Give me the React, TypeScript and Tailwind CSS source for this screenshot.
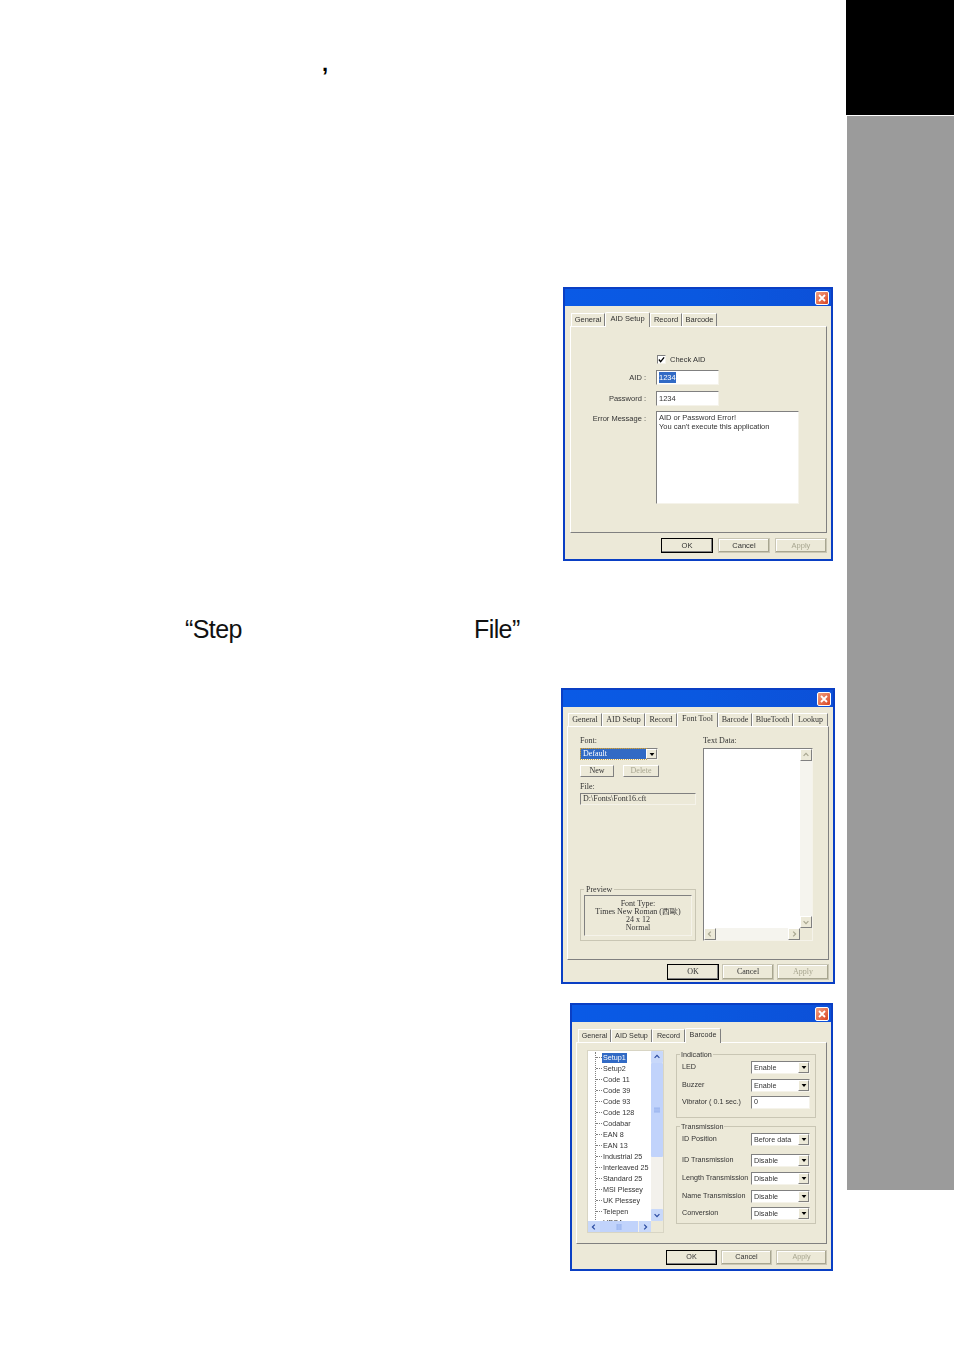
import type { ReactNode } from "react";

const SUNKEN = "border border-t-[#808080] border-l-[#808080] border-r-[#f5f3ea] border-b-[#f5f3ea]";
const RAISED = "border border-t-white border-l-white border-r-[#808080] border-b-[#808080]";

function CloseIcon() {
  return (
    <div className="flex h-[14px] w-[14px] items-center justify-center rounded-[2px] border border-white bg-gradient-to-br from-[#f0a080] to-[#d8401c]">
      <svg viewBox="0 0 10 10" className="h-[10px] w-[10px]">
        <path d="M2 2 L8 8 M8 2 L2 8" stroke="#fff" strokeWidth="1.8" />
      </svg>
    </div>
  );
}

function Tabs({ tabs, active, offset }: { tabs: [string, number][]; active: number; offset: string }) {
  return (
    <div className={`flex items-end h-[14px] ${offset}`}>
      {tabs.map(([name, w], i) => (
        <div
          key={name}
          style={{ width: w }}
          className={
            i === active
              ? "relative z-10 -mb-px flex h-[15px] shrink-0 items-start justify-center rounded-t-[2px] border border-b-0 border-t-white border-l-white border-r-[#808080] bg-[#ece9d8] pt-[1px] leading-[10px]"
              : "flex h-[13px] shrink-0 items-center justify-center border-t border-l border-r border-t-white border-l-white border-r-[#808080] leading-[10px]"
          }
        >
          {name}
        </div>
      ))}
    </div>
  );
}

function Buttons({ w, h, gap }: { w: number; h: number; gap: string }) {
  return (
    <div className={`flex justify-end ${gap}`}>
      <div style={{ width: w, height: h }} className="flex items-center justify-center border border-black bg-[#ece9d8] shadow-[inset_-1px_-1px_0_#808080]">OK</div>
      <div style={{ width: w, height: h }} className="flex items-center justify-center border border-[#c9c6b4] bg-[#ece9d8] shadow-[inset_-1px_-1px_0_#a8a690,inset_1px_1px_0_#fff]">Cancel</div>
      <div style={{ width: w, height: h }} className="flex items-center justify-center border border-[#c9c6b4] bg-[#ece9d8] text-[#a8a690] shadow-[inset_-1px_-1px_0_#a8a690,inset_1px_1px_0_#fff]">Apply</div>
    </div>
  );
}

function Dialog({ className, font, children }: { className: string; font: string; children: ReactNode }) {
  return (
    <div className={`flex shrink-0 flex-col border-2 border-[#0a3fc4] bg-[#ece9d8] text-[#333] blur-[0.4px] ${font} ${className}`}>
      <div className="flex h-[17px] shrink-0 items-center justify-end bg-gradient-to-r from-[#0a5ae6] via-[#0a58e0] to-[#0c50d8] pr-[2px]">
        <CloseIcon />
      </div>
      {children}
    </div>
  );
}

function Arrow({ dir, color = "#000" }: { dir: "up" | "down" | "left" | "right"; color?: string }) {
  const d = {
    up: "M2 6 L5 3 L8 6",
    down: "M2 4 L5 7 L8 4",
    left: "M6 2 L3 5 L6 8",
    right: "M4 2 L7 5 L4 8",
  }[dir];
  return (
    <svg viewBox="0 0 10 10" className="h-[8px] w-[8px]">
      <path d={d} fill="none" stroke={color} strokeWidth="1.5" />
    </svg>
  );
}

function Grip({ vertical }: { vertical?: boolean }) {
  return (
    <svg viewBox="0 0 8 8" className={vertical ? "h-[6px] w-[6px]" : "h-[6px] w-[6px] rotate-90"}>
      <path d="M0 1.5 H8 M0 4 H8 M0 6.5 H8" stroke="#7f9fe6" strokeWidth="1" />
    </svg>
  );
}

function Combo({ value, w, h = 13 }: { value: string; w: number; h?: number }) {
  return (
    <div style={{ width: w, height: h }} className={`flex items-center justify-between bg-white ${SUNKEN}`}>
      <span className="pl-[2px] leading-none">{value}</span>
      <span className={`flex h-full w-[11px] items-center justify-center bg-[#ece9d8] ${RAISED}`}>
        <svg viewBox="0 0 8 5" className="h-[3px] w-[6px]">
          <path d="M0 0 H8 L4 5 Z" fill="#000" />
        </svg>
      </span>
    </div>
  );
}

function AidDialog() {
  const label = "flex h-[14px] w-[76px] items-center justify-end pr-[1px]";
  return (
    <Dialog className="ml-[563px] h-[274px] w-[270px]" font="font-['Liberation_Sans',sans-serif] text-[7.5px]">
      <div className="flex flex-1 flex-col pt-[6px] pl-[5px] pr-[4px]">
        <Tabs tabs={[["General", 34], ["AID Setup", 45], ["Record", 32], ["Barcode", 35]]} active={1} offset="pl-[1px]" />
        <div className={`flex h-[207px] shrink-0 flex-col gap-[5px] pt-[27px] ${RAISED}`}>
          <div className="flex items-center gap-[4px] pl-[86px]">
            <span className={`flex h-[9px] w-[9px] items-center justify-center bg-white ${SUNKEN}`}>
              <svg viewBox="0 0 8 8" className="h-[7px] w-[7px]">
                <path d="M1 4 L3 6.5 L7 1.5" fill="none" stroke="#000" strokeWidth="1.5" />
              </svg>
            </span>
            <span>Check AID</span>
          </div>
          <div className="flex items-center gap-[9px]">
            <span className={label}>AID :</span>
            <div className={`flex h-[15px] w-[63px] items-center bg-white pl-[2px] ${SUNKEN}`}>
              <span className="bg-[#316ac5] text-white">1234</span>
            </div>
          </div>
          <div className="mt-[1px] flex items-center gap-[9px]">
            <span className={label}>Password :</span>
            <div className={`flex h-[15px] w-[63px] items-center bg-white pl-[2px] ${SUNKEN}`}>1234</div>
          </div>
          <div className="flex items-start gap-[9px]">
            <span className={label}>Error Message :</span>
            <div className={`h-[93px] w-[143px] bg-white pl-[2px] pt-[2px] leading-[8.5px] ${SUNKEN}`}>
              AID or Password Error!
              <br />
              You can't execute this application
            </div>
          </div>
        </div>
        <div className="mt-[5px]">
          <Buttons w={52} h={15} gap="gap-[5px]" />
        </div>
      </div>
    </Dialog>
  );
}

function FontDialog() {
  return (
    <Dialog className="ml-[561px] h-[296px] w-[274px]" font="font-['Liberation_Serif',serif] text-[8px]">
      <div className="flex flex-1 flex-col pt-[5px] pl-[4px] pr-[4px]">
        <Tabs
          tabs={[["General", 34], ["AID Setup", 43], ["Record", 32], ["Font Tool", 41], ["Barcode", 34], ["BlueTooth", 41], ["Lookup", 35]]}
          active={3}
          offset="pl-[1px]"
        />
        <div className={`flex h-[234px] shrink-0 gap-[7px] pl-[12px] pt-[9px] ${RAISED}`}>
          <div className="flex h-[205px] w-[116px] flex-col">
            <div className="h-[12px] leading-[10px]">Font:</div>
            <div className={`flex h-[12px] w-[78px] items-center justify-between bg-white ${SUNKEN}`}>
              <span className="h-full w-[65px] bg-[#316ac5] pl-[2px] leading-[10px] text-white outline-1 outline-dotted outline-[#c8a040]">Default</span>
              <span className={`flex h-full w-[11px] items-center justify-center bg-[#ece9d8] ${RAISED}`}>
                <svg viewBox="0 0 8 5" className="h-[3px] w-[6px]">
                  <path d="M0 0 H8 L4 5 Z" fill="#000" />
                </svg>
              </span>
            </div>
            <div className="mt-[5px] flex gap-[9px]">
              <div className={`flex h-[12px] w-[34px] items-center justify-center ${RAISED}`}>New</div>
              <div className={`flex h-[12px] w-[36px] items-center justify-center text-[#a8a690] ${RAISED}`}>Delete</div>
            </div>
            <div className="mt-[4px] h-[12px] leading-[12px]">File:</div>
            <div className={`flex h-[12px] items-center pl-[2px] ${SUNKEN}`}>D:\Fonts\Font16.cft</div>
            <div className="flex-1" />
            <div className="h-[52px] border border-[#c9c6b4] px-[3px] pb-[3px]">
              <div className="-mt-[5px] h-[10px] w-fit bg-[#ece9d8] px-[2px] leading-[10px]">Preview</div>
              <div className={`flex h-[41px] flex-col items-center justify-center leading-[8px] ${SUNKEN}`}>
                <span>Font Type:</span>
                <span>Times New Roman (西歐)</span>
                <span>24 x 12</span>
                <span>Normal</span>
              </div>
            </div>
          </div>
          <div className="flex h-[205px] w-[110px] flex-col">
            <div className="h-[12px] leading-[10px]">Text Data:</div>
            <div className={`flex flex-1 flex-col bg-white ${SUNKEN}`}>
              <div className="flex flex-1">
                <div className="flex-1" />
                <div className="flex w-[12px] flex-col justify-between bg-[#f5f4ee]">
                  <span className={`flex h-[12px] items-center justify-center bg-[#ece9d8] ${RAISED}`}><Arrow dir="up" color="#a8a690" /></span>
                  <span className={`flex h-[12px] items-center justify-center bg-[#ece9d8] ${RAISED}`}><Arrow dir="down" color="#a8a690" /></span>
                </div>
              </div>
              <div className="flex h-[12px] bg-[#f5f4ee]">
                <span className={`flex w-[12px] items-center justify-center bg-[#ece9d8] ${RAISED}`}><Arrow dir="left" color="#a8a690" /></span>
                <div className="flex-1" />
                <span className={`flex w-[12px] items-center justify-center bg-[#ece9d8] ${RAISED}`}><Arrow dir="right" color="#a8a690" /></span>
                <div className="w-[12px] bg-[#ece9d8]" />
              </div>
            </div>
          </div>
        </div>
        <div className="mt-[4px]">
          <Buttons w={52} h={16} gap="gap-[3px]" />
        </div>
      </div>
    </Dialog>
  );
}

const TREE = ["Setup1", "Setup2", "Code 11", "Code 39", "Code 93", "Code 128", "Codabar", "EAN 8", "EAN 13", "Industrial 25", "Interleaved 25", "Standard 25", "MSI Plessey", "UK Plessey", "Telepen", "UPCA"];

function BarcodeDialog() {
  const row = "flex items-center justify-between pl-[5px] pr-[5px]";
  return (
    <Dialog className="ml-[570px] h-[268px] w-[263px]" font="font-['Liberation_Sans',sans-serif] text-[7.2px]">
      <div className="flex flex-1 flex-col pt-[6px] pl-[4px] pr-[4px]">
        <Tabs tabs={[["General", 33], ["AID Setup", 41], ["Record", 33], ["Barcode", 36]]} active={3} offset="pl-[2px]" />
        <div className={`flex h-[202px] shrink-0 gap-[12px] pl-[10px] pt-[7px] ${RAISED}`}>
          <div className="flex h-[183px] w-[77px] flex-col border border-[#d8d5c4] bg-white">
            <div className="flex h-[170px]">
              <div className="flex-1 overflow-hidden pt-[1px]">
                <div className="ml-[7px] flex flex-col border-l border-dotted border-[#808080]">
                  {TREE.map((t, i) => (
                    <div key={t} className="flex h-[11px] shrink-0 items-center">
                      <span className="w-[6px] border-t border-dotted border-[#808080]" />
                      <span className={i === 0 ? "bg-[#316ac5] px-[1px] leading-[10px] text-white" : "px-[1px] leading-[10px]"}>{t}</span>
                    </div>
                  ))}
                </div>
              </div>
              <div className="flex w-[12px] flex-col bg-[#f3f1ec]">
                <span className="flex h-[12px] items-center justify-center rounded-[1px] bg-[#c8d8fa]"><Arrow dir="up" color="#2a4aa0" /></span>
                <span className="flex h-[94px] items-center justify-center rounded-[1px] bg-[#c1d3fb]"><Grip vertical /></span>
                <div className="flex-1" />
                <span className="flex h-[12px] items-center justify-center rounded-[1px] bg-[#c8d8fa]"><Arrow dir="down" color="#2a4aa0" /></span>
              </div>
            </div>
            <div className="flex h-[12px] bg-[#f3f1ec]">
              <span className="flex w-[12px] items-center justify-center bg-[#c8d8fa]"><Arrow dir="left" color="#2a4aa0" /></span>
              <span className="flex w-[38px] items-center justify-center bg-[#c1d3fb]"><Grip /></span>
              <span className="w-[1px]" />
              <span className="flex w-[12px] items-center justify-center bg-[#c8d8fa]"><Arrow dir="right" color="#2a4aa0" /></span>
              <span className="w-[12px] bg-[#ece9d8]" />
            </div>
          </div>
          <div className="flex w-[140px] flex-col pt-[4px]">
            <div className="h-[64px] border border-[#c9c6b4]">
              <div className="-mt-[5px] ml-[3px] h-[10px] w-fit bg-[#ece9d8] px-[1px] leading-[10px]">Indication</div>
              <div className={`${row} mt-[1px]`}><span>LED</span><Combo value="Enable" w={59} /></div>
              <div className={`${row} mt-[5px]`}><span>Buzzer</span><Combo value="Enable" w={59} /></div>
              <div className={`${row} mt-[4px]`}>
                <span>Vibrator ( 0.1 sec.)</span>
                <div className={`flex h-[13px] w-[59px] items-center bg-white pl-[2px] ${SUNKEN}`}>0</div>
              </div>
            </div>
            <div className="mt-[8px] h-[98px] border border-[#c9c6b4]">
              <div className="-mt-[5px] ml-[3px] h-[10px] w-fit bg-[#ece9d8] px-[1px] leading-[10px]">Transmission</div>
              <div className={`${row} mt-[1px]`}><span>ID Position</span><Combo value="Before data" w={59} /></div>
              <div className={`${row} mt-[8px]`}><span>ID Transmission</span><Combo value="Disable" w={59} /></div>
              <div className={`${row} mt-[5px]`}><span>Length Transmission</span><Combo value="Disable" w={59} /></div>
              <div className={`${row} mt-[5px]`}><span>Name Transmission</span><Combo value="Disable" w={59} /></div>
              <div className={`${row} mt-[4px]`}><span>Conversion</span><Combo value="Disable" w={59} /></div>
            </div>
          </div>
        </div>
        <div className="mt-[6px]">
          <Buttons w={51} h={15} gap="gap-[4px]" />
        </div>
      </div>
    </Dialog>
  );
}

export default function App() {
  return (
    <div className="flex h-[1352px] w-[954px] overflow-hidden bg-white">
      <main className="flex w-[846px] shrink-0 flex-col">
        <div className="mt-[52px] h-[24px] pl-[322px] font-['Liberation_Sans',sans-serif] text-[22px] font-bold leading-[24px] text-black">,</div>
        <div className="mt-[211px]">
          <AidDialog />
        </div>
        <div className="ml-[185px] mt-[52px] flex h-[32px] font-['Liberation_Sans',sans-serif] text-[25px] leading-[32px] tracking-[-0.6px] text-[#111]">
          <span className="w-[289px]">“Step</span>
          <span>File”</span>
        </div>
        <div className="mt-[43px]">
          <FontDialog />
        </div>
        <div className="mt-[19px]">
          <BarcodeDialog />
        </div>
      </main>
      <aside className="flex w-[108px] shrink-0 flex-col">
        <div className="h-[115px] bg-black" />
        <div className="ml-[1px] mt-[1px] h-[1074px] bg-[#9b9b9b]" />
      </aside>
    </div>
  );
}
